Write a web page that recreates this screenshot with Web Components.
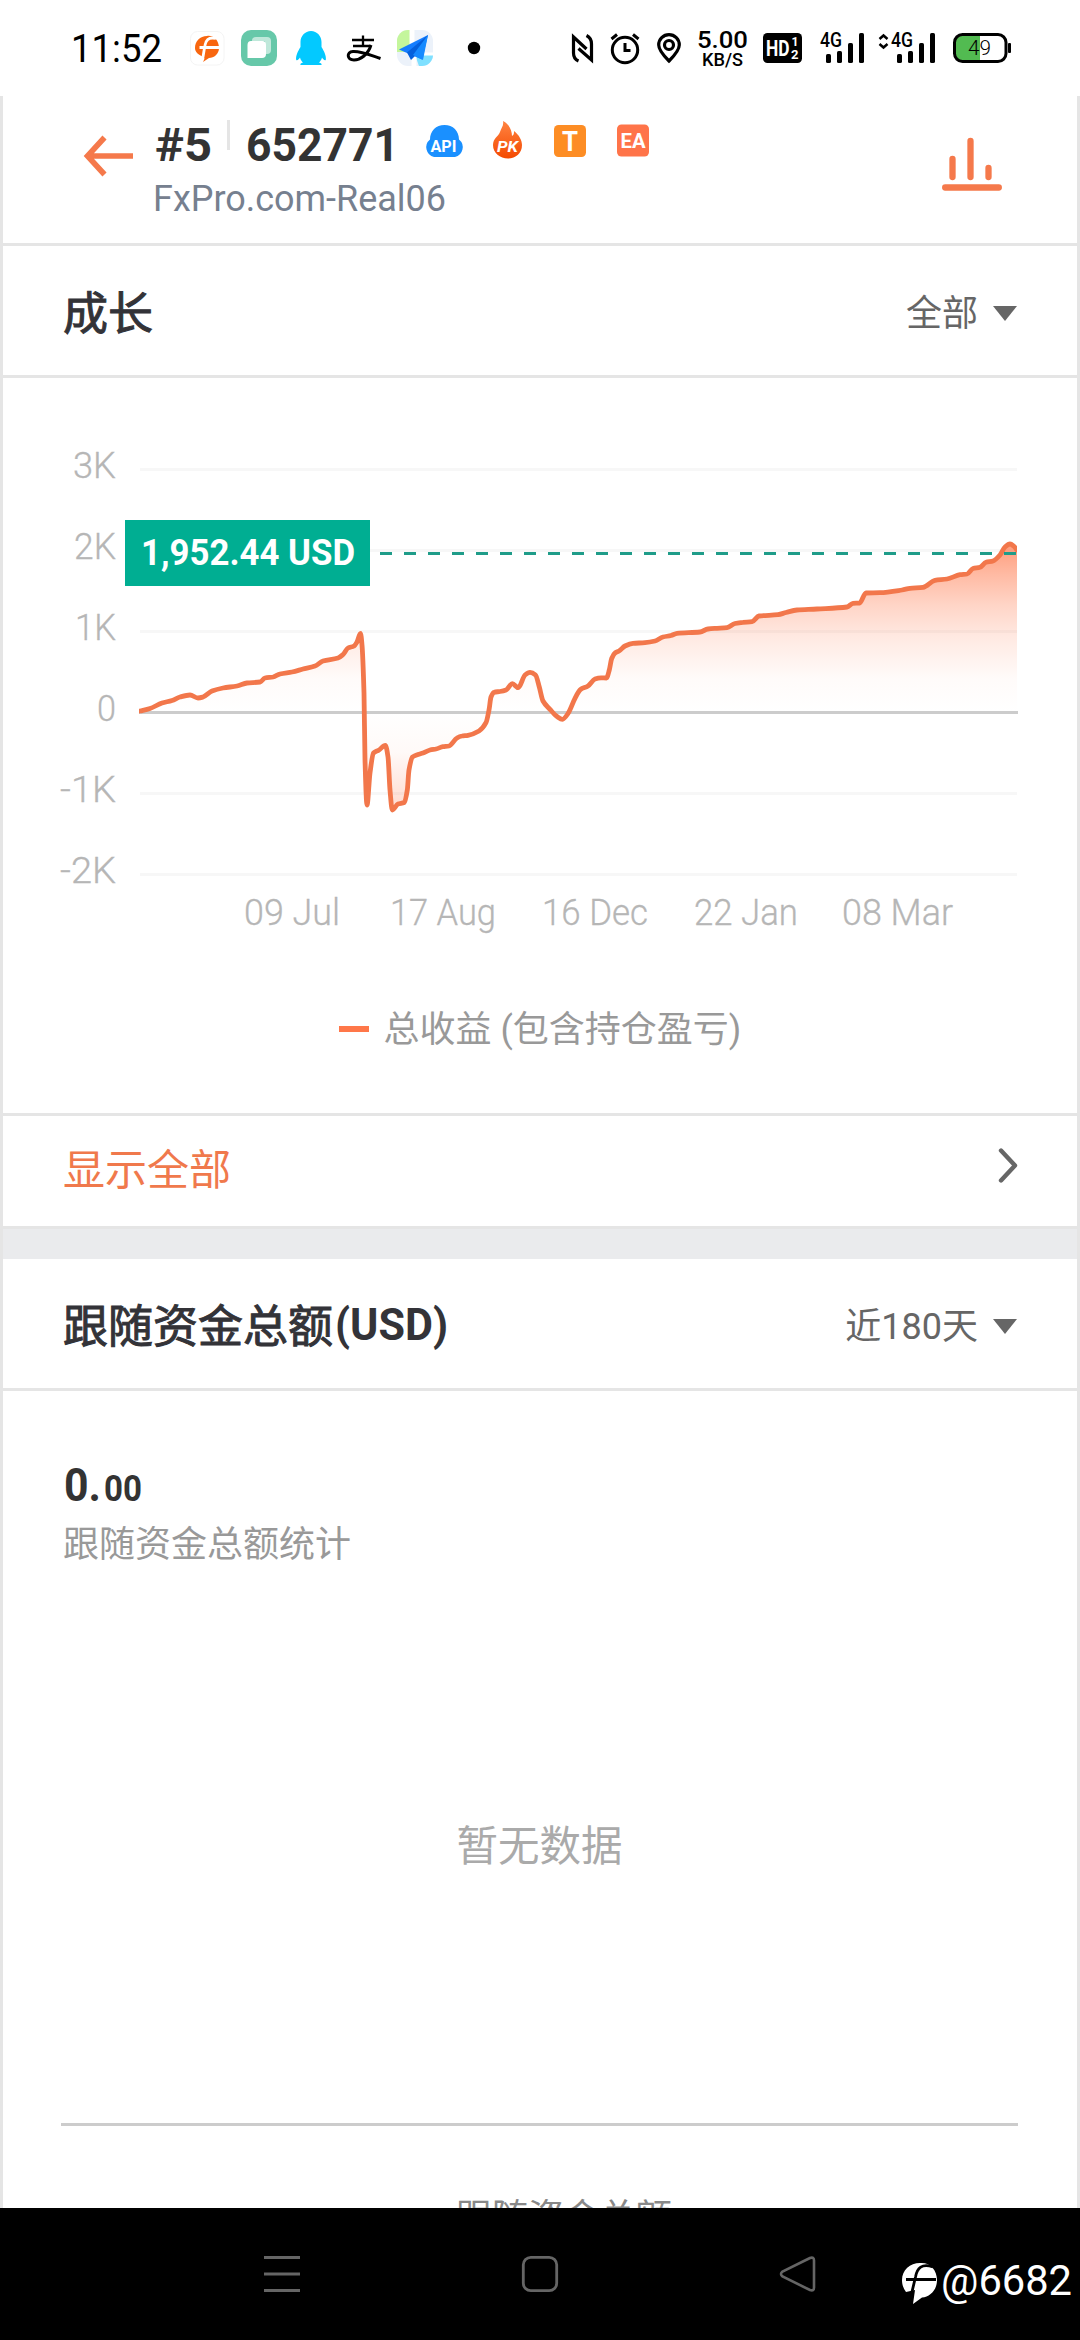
<!DOCTYPE html>
<html lang="zh-CN">
<head>
<meta charset="utf-8">
<title>#5 652771</title>
<style>
html,body{margin:0;padding:0;background:#fff}
body{width:1080px;height:2340px;overflow:hidden;font-family:Roboto,"Noto Sans CJK SC",sans-serif;color:#333}
</style>
</head>
<body>
<account-screen></account-screen>
<script>
const SANS = 'Roboto,"Noto Sans CJK SC",sans-serif';

function define(name, render) {
  customElements.define(name, class extends HTMLElement {
    connectedCallback() {
      if (this.shadowRoot) return;
      const t = document.createElement('template');
      t.innerHTML = render(this);
      this.attachShadow({ mode: 'open' }).appendChild(t.content.cloneNode(true));
    }
  });
}

// Latin text set to a fixed advance; its box is the cap height, baseline at the bottom.
define('din-text', el => {
  const size = +el.getAttribute('size'), w = +el.getAttribute('w');
  const h = Math.round(size * 0.711);
  const weight = el.getAttribute('weight') || 400;
  return `<style>:host{display:block;flex:none;width:${w}px;height:${h}px}svg{display:block;overflow:visible}</style>
  <svg width="${w}" height="${h}"><text x="0" y="${h}" textLength="${w}" lengthAdjust="spacingAndGlyphs" font-family='${SANS}' font-size="${size}" font-weight="${weight}" fill="currentColor">${el.textContent}</text></svg>`;
});

// Icons: [x, y, width, height, markup]
const T = (x, y, w, s, wt, txt, extra = '') =>
  `<text x="${x}" y="${y}" textLength="${w}" lengthAdjust="spacingAndGlyphs" font-family='${SANS}' font-size="${s}" font-weight="${wt}" ${extra}>${txt}</text>`;
const bars = x => `<g><rect x="${x}" y="54" width="5" height="9" rx="1.6"/><rect x="${x + 11}" y="51" width="5" height="12" rx="1.6"/><rect x="${x + 22}" y="43" width="5" height="20" rx="1.6"/><rect x="${x + 33}" y="33" width="5" height="30" rx="1.6"/></g>`;
const ICONS = {
  follow: [190, 28, 35, 40, `<rect x="190.500" y="31.500" width="33.500" height="33.500" rx="7" fill="#fff" stroke="#f4f4f4"/>
    <path d="M207 36C213 35 219 40 219 48C219 54 214 58 209 58L203 62C204 60 205 58 204 57C198 55 195 52 195 48C195 41 200 36 207 36Z" fill="#f8660f"/>
    <path d="M216 38.500C208 36.500 205.500 41 204.800 46L203 57M199.500 47.500H219" fill="none" stroke="#fff" stroke-width="2.800"/>`],
  green: [241, 28, 36, 40, `<rect x="241" y="30" width="36" height="36" rx="10" fill="#66c8a9"/>
    <path d="M252 41V40.500Q252 37 256 37H267Q271 37 271 41V50Q271 54 267 54H265V41Z" fill="#bfe8da"/><path d="M251 41H262.500Q266 41 266 45V54Q266 58 262 58H247.500V45Q247.500 41 251 41Z" fill="#fff"/>`],
  penguin: [295, 28, 32, 40, `<path d="M311 31C317 31 321.500 36 321.500 42V47C324 51 326.500 56 325.800 60C324.500 61 323 59 322 57.500C321.500 60 320 61.500 319 62.500C321 63 322 64 321.500 65H300.500C300 64 301 63 303 62.500C302 61.500 300.500 60 300 57.500C299 59 297.500 61 296.200 60C295.500 56 298 51 300.500 47V42C300.500 36 305 31 311 31Z" fill="#03c9ff"/>`],
  pay: [346, 28, 36, 40, `<g fill="none" stroke="#000"><path d="M352 40H374M353 46H370.500M363 35.500V46" stroke-width="2.300"/><path d="M371 45C368 55 360 60 354 60C347 60 346 52 353 51.500C361 51 370 55 380.500 58.500" stroke-width="3"/></g>`],
  maps: [396, 28, 38, 40, `<clipPath id="m"><rect x="397" y="30" width="36" height="36" rx="11"/></clipPath><g clip-path="url(#m)"><rect x="397" y="30" width="36" height="36" fill="#ecf2fa"/><path d="M397 30H411V52H397Z" fill="#c4f69c"/><path d="M415 55H433V66H419Z" fill="#7fe0ff"/><path d="M411 30V54M415 54V66M411 54H433M413 30V66" stroke="#fff" stroke-width="3"/></g><path d="M428 35L399 49.500L407 53L422 59.500Z" fill="#157dff"/><path d="M428 35L407 52.500L411 60L415 56Z" fill="#0560dc"/><path d="M428 35L413 55L423 60Z" fill="#168aff"/>`],
  dot: [467, 28, 14, 40, `<circle cx="474" cy="48" r="6.200"/>`],
  nfc: [571, 28, 23, 40, `<path d="M578.500 61Q573.500 59 573.500 53V37L586.500 49M586.500 35.500Q591.500 38 591.500 44V60L578.500 48.500" fill="none" stroke="#000" stroke-width="3.200"/>`],
  alarm: [609, 28, 32, 40, `<g fill="none" stroke="#000" stroke-width="3"><circle cx="625" cy="50" r="12.700"/><path d="M611.500 39L617 34.500M638.500 39L633 34.500M625 43V50.500H630.500"/></g>`],
  pin: [656, 28, 26, 40, `<g fill="none" stroke="#000" stroke-width="3.200"><path d="M669 61C663 55 658.700 50 658.700 45A10.300 10.300 0 0 1 679.300 45C679.300 50 675 55 669 61Z"/><circle cx="669" cy="45" r="4.500"/></g>`],
  speed: [696, 28, 54, 40, T(697, 48, 51, 24.5, 500, '5.00') + T(702, 65.5, 41, 18.5, 500, 'KB/S')],
  hd: [763, 28, 39, 40, `<rect x="763" y="33" width="39" height="30" rx="4.500"/><g fill="#fff">${T(766, 56, 23.5, 21.5, 700, 'HD')}${T(791.5, 46, 7, 12, 700, '1')}${T(791, 59, 7.5, 12, 700, '2')}</g>`],
  sim1: [819, 28, 46, 40, T(820, 47, 22, 19.500, 500, '4G') + bars(826)],
  sim2: [878, 28, 58, 40, `<path d="M879.500 39L883.500 35.500L887.500 39M879.500 44L883.500 47.500L887.500 44" fill="none" stroke="#000" stroke-width="2.500"/>` + T(891, 47, 22, 19.500, 500, '4G') + bars(897)],
  battery: [952, 28, 60, 40, `<path d="M962 35H980V61.500H962Q955 61.500 955 54V42Q955 35 962 35Z" fill="#52bb51"/><rect x="954.500" y="34.500" width="51.500" height="27" rx="8" fill="none" stroke="#000" stroke-width="3"/><rect x="1008" y="43" width="3" height="10" rx="1"/>` + T(968, 55, 23, 20.5, 300, '49')],
  back: [82, 134, 53, 44, `<path d="M104.500 137.500L87.500 156L104.500 174.500M87 156H133" fill="none" stroke="#f5794b" stroke-width="5.600"/>`],
  api: [424, 119, 41, 44, `<path d="M434 157A10 10 0 0 1 430 139.500C430 131 436 125 444.500 125S459 131 459 139.500A10 10 0 0 1 455 157Z" fill="#1a90ff"/>${T(430.5, 151.500, 26, 16.5, 700, 'API', 'fill="#fff"')}`],
  flame: [492, 119, 31, 44, `<defs><linearGradient id="f" x1="0" y1="0" x2="0" y2="1"><stop offset="0" stop-color="#ff8442"/><stop offset="1" stop-color="#f44900"/></linearGradient></defs><path d="M503 121C509 124 512 130 512 136C514 135 514 133 514 131C519 135 522 140 522 145C522 153 516 158.500 508 158.500S493 153 493 145C493 138 498 137 500 132C501 128 504 126 503 121Z" fill="url(#f)"/>${T(497, 151.500, 21, 15.5, 700, 'PK', 'fill="#fff" font-style="italic"')}`],
  trade: [554, 119, 32, 44, `<rect x="554" y="125" width="32" height="32" rx="4.500" fill="#fd8d24"/>${T(562, 150.500, 16, 28, 700, 'T', 'fill="#fff"')}`],
  ea: [617, 119, 32, 44, `<rect x="617" y="124.500" width="32" height="32" rx="4.500" fill="#ff7449"/>${T(620.5, 148, 25, 20, 700, 'EA', 'fill="#fff"')}`],
  stats: [940, 136, 64, 57, `<g stroke="#f5794b" stroke-width="6.300" stroke-linecap="round"><path d="M952.500 159V177M970.500 141V177M988.500 168V177M945.200 187.500H998.800"/></g>`],
  caret: [993, 306, 24, 15, `<path d="M993 306H1017L1005 321Z" fill="#666"/>`],
  chevron: [997, 1146, 22, 39, `<path d="M1001 1150.500L1015 1165.500L1001 1180.500" fill="none" stroke="#666" stroke-width="4.400" stroke-linecap="round" stroke-linejoin="round"/>`],
  menu: [264, 2254, 36, 40, `<path d="M264 2257.500H300M264 2274H300M264 2290.500H300" stroke="#656565" stroke-width="3"/>`],
  home: [521, 2254, 38, 40, `<rect x="523.300" y="2257.300" width="33.400" height="33.400" rx="7.500" fill="none" stroke="#656565" stroke-width="2.800"/>`],
  prev: [779, 2254, 38, 40, `<path d="M810 2258L782.500 2271.500Q779.500 2274 782.500 2276.500L810 2290Q814 2291.500 814 2287.500V2260.500Q814 2256.500 810 2258Z" fill="none" stroke="#656565" stroke-width="2.600"/>`],
  brand: [902, 2260, 36, 46, `<path d="M920 2263C930 2262 937 2270 937 2280C937 2290 930 2297 922 2297.500L913 2304L915 2290L906 2292C903 2288 902 2284 902 2280C902 2270 910 2263 920 2263Z" fill="#fff"/><path d="M933 2267C922 2263 917 2268 915.500 2277L911 2296M906 2279.500H936" fill="none" stroke="#000" stroke-width="2.800"/>`]
};
define('ui-icon', el => {
  const [x, y, w, h, body] = ICONS[el.getAttribute('name')];
  return `<style>:host{display:block;flex:none;width:${w}px;height:${h}px;margin-left:${el.getAttribute('gap') || 0}px}svg{display:block;overflow:visible}</style>
  <svg width="${w}" height="${h}" viewBox="${x} ${y} ${w} ${h}">${body}</svg>`;
});

define('status-bar', () => {
  const left = ['follow', 'green', 'penguin', 'pay', 'maps', 'dot'];
  const right = ['nfc', 'alarm', 'pin', 'speed', 'hd', 'sim1', 'sim2', 'battery'];
  let edge = 162;
  const item = n => { const g = ICONS[n][0] - edge; edge = ICONS[n][0] + ICONS[n][2]; return `<ui-icon name="${n}" gap="${g}"></ui-icon>`; };
  return `<style>:host{display:flex;align-items:center;height:96px;padding-left:71px;box-sizing:border-box;color:#000}</style>
  <din-text size="38" w="91" weight="400">11:52</din-text>${[...left, ...right].map(item).join('')}`;
});

define('account-header', () => `<style>
  :host{display:flex;height:147px;border-bottom:3px solid #e5e5e5;box-sizing:content-box}
  .back{margin:38px 0 0 79px}.info{margin-left:20px;padding-top:23px;flex:1}
  .row{display:flex;align-items:center;height:44px}.row din-text{margin-top:6px;color:#333}
  .bar{width:3px;height:30px;background:#e5e5e5;margin:-12px 16px 0 15px}
  .server{color:#76808f;margin:22px 0 0 -2px}.stats{margin:40px 73px 0 0}</style>
  <ui-icon class="back" name="back"></ui-icon>
  <div class="info"><div class="row"><din-text size="47" w="57" weight="700">#5</din-text><span class="bar"></span><din-text size="47" w="153" weight="700">652771</din-text>
  <ui-icon name="api" gap="25"></ui-icon><ui-icon name="flame" gap="27"></ui-icon><ui-icon name="trade" gap="31"></ui-icon><ui-icon name="ea" gap="31"></ui-icon></div>
  <din-text class="server" size="36.5" w="293">FxPro.com-Real06</din-text></div>
  <ui-icon class="stats" name="stats"></ui-icon>`);

define('section-head', () => `<style>
  :host{display:flex;align-items:center;justify-content:space-between;height:129px;padding:0 60px;border-bottom:3px solid #e5e5e5}
  .t,.f{display:flex;align-items:center}.t{font-size:45px;color:#333338;-webkit-text-stroke:1px #333338}
  .f{font-size:36px;color:#666;gap:15px}.f ui-icon{margin-top:6px}.f slot{display:block;margin-top:-2px}</style>
  <div class="t"><slot name="title"></slot></div><div class="f"><slot name="filter"></slot><ui-icon name="caret"></ui-icon></div>`);

const SERIES = [[140,711],[150,708.5],[162,703],[172,700.5],[180,697],[190,695],[198,698],[203,697],[212,691],[223,688],[237,686],[247,683],[260,682],[265,678],[273,677],[280,674],[292,672],[303,669],[315,666],[323,661],[338,658],[343,654.5],[348,648],[354,646],[357,642],[360.500,633.500],[362,645],[364,693],[365,760],[367,805],[370,773],[373.500,753],[379,750],[385.300,745.300],[388,757],[390,790],[392.300,810],[398,804],[404.300,802.500],[407.300,790],[409,770],[412.500,757],[418,754.5],[423,753],[430,750],[436,749],[443,746.7],[449,746],[457,738],[462,736],[468,735.3],[479,731],[486,722.7],[489,710],[491,697],[494,692.3],[500,691.5],[506,690],[512.300,683.7],[518.300,687.7],[525,675],[530,672.3],[535.500,675],[539.300,687],[543,701],[550,709.3],[557,716.5],[562.500,719.3],[568,713.5],[575,698.3],[580.500,689.5],[588,686],[595,679],[601,677.8],[606.500,678],[609.300,670],[611.700,658.5],[615,653],[619,651],[625,646],[633,643.3],[645,642.7],[655,641],[663,637],[671,635.5],[677,633.3],[700,632],[708,629],[717,628.300],[727,627.7],[735,623.5],[743,622.3],[752,621.7],[759,616],[778,614.7],[786,612.5],[797,610],[817,609],[847,607],[853,603.3],[859.500,603],[866,593],[880,592.7],[902,590],[910,588.3],[923,587.3],[935,580.3],[947,579],[960,574.700],[967,574],[973,568.5],[980,567.3],[986,562.3],[993,561],[1000,555],[1005,547],[1010,544],[1014,546.3],[1017,550]];
// Monotone cubic through the points, so steep moves never overshoot.
function curve(p) {
  const n = p.length, d = [], m = [];
  for (let i = 0; i < n - 1; i++) d.push((p[i + 1][1] - p[i][1]) / (p[i + 1][0] - p[i][0]));
  m[0] = d[0]; m[n - 1] = d[n - 2];
  for (let i = 1; i < n - 1; i++) m[i] = d[i - 1] * d[i] <= 0 ? 0 : 2 * d[i - 1] * d[i] / (d[i - 1] + d[i]);
  let s = `M${p[0]}`;
  for (let i = 0; i < n - 1; i++) {
    const h = (p[i + 1][0] - p[i][0]) / 3;
    s += `C${(p[i][0] + h).toFixed(1)} ${(p[i][1] + m[i] * h).toFixed(1)} ${(p[i + 1][0] - h).toFixed(1)} ${(p[i + 1][1] - m[i + 1] * h).toFixed(1)} ${p[i + 1][0]} ${p[i + 1][1]}`;
  }
  return s;
}
define('growth-chart', () => {
  const line = curve(SERIES);
  const grid = [469.5, 550.5, 631.5, 793.5, 874.5].map(y => `<path d="M140 ${y}H1017" stroke="#f7f7f7" stroke-width="3"/>`).join('');
  const yl = [['3K', 73, 469], ['2K', 74, 550], ['1K', 75, 631], ['0', 97, 712], ['-1K', 60, 793], ['-2K', 60, 874]].map(([t, x, y]) => T(x, y + 9, 116 - x, 36, 300, t)).join('');
  const xl = [['09 Jul', 244, 96], ['17 Aug', 390, 106], ['16 Dec', 542, 106], ['22 Jan', 694, 104], ['08 Mar', 842, 111]].map(([t, x, w]) => T(x, 925, w, 36, 300, t)).join('');
  return `<style>:host{display:block;height:735px;border-bottom:3px solid #e5e5e5}svg{display:block;height:590px}
  .legend{display:flex;align-items:center;justify-content:center;gap:15px;height:124px;font-size:36px;line-height:52px;color:#999;white-space:pre}
  .legend i{width:30px;height:6px;background:#ff7749;margin-top:-2px}</style>
  <svg width="1074" viewBox="3 378 1074 590">
  <defs><linearGradient id="up" gradientUnits="userSpaceOnUse" x1="0" y1="544" x2="0" y2="712"><stop offset="0" stop-color="#ff7547" stop-opacity=".72"/><stop offset=".18" stop-color="#ff7547" stop-opacity=".5"/><stop offset=".36" stop-color="#ff7547" stop-opacity=".31"/><stop offset=".55" stop-color="#ff7547" stop-opacity=".16"/><stop offset=".8" stop-color="#ff7547" stop-opacity=".03"/><stop offset="1" stop-color="#ff7547" stop-opacity="0"/></linearGradient>
  <linearGradient id="dn" gradientUnits="userSpaceOnUse" x1="0" y1="712" x2="0" y2="812"><stop offset="0" stop-color="#ff7547" stop-opacity="0"/><stop offset=".4" stop-color="#ff7547" stop-opacity=".04"/><stop offset="1" stop-color="#ff7547" stop-opacity=".27"/></linearGradient>
  <clipPath id="a"><path d="M0 378H1080V712.500H0Z"/></clipPath><clipPath id="b"><path d="M0 712.500H1080V900H0Z"/></clipPath><clipPath id="c"><path d="M139 500H1017V850H139Z"/></clipPath></defs>
  ${grid}<g fill="#b6b6b6" stroke="#b6b6b6" stroke-width=".3">${yl}${xl}</g>
  <path d="M139 712.500H1018" stroke="#ccc" stroke-width="3"/>
  <path d="${line}V712.500H140Z" fill="url(#up)" clip-path="url(#a)"/><path d="${line}V712.500H140Z" fill="url(#dn)" clip-path="url(#b)"/>
  <path d="${line}" fill="none" stroke="#f2774b" stroke-width="4.800" stroke-linejoin="round" stroke-linecap="round" clip-path="url(#c)"/>
  <path d="M380 553.500H1016" stroke="#1f9c89" stroke-width="3" stroke-dasharray="12 12"/>
  <rect x="125" y="520" width="245" height="66" fill="#00ae92"/>${T(141, 565, 214, 36, 700, '1,952.44 USD', 'fill="#fff"')}
  </svg><div class="legend"><i></i><span>总收益 (包含持仓盈亏)</span></div>`;
});

define('show-all', () => `<style>:host{display:flex;align-items:center;justify-content:space-between;height:110px;padding:0 58px 0 60px;border-bottom:3px solid #e5e5e5}
  span{font-size:42px;color:#f0794c;line-height:60px;margin-top:-1px}ui-icon{margin-top:-11px}</style><span><slot></slot></span><ui-icon name="chevron"></ui-icon>`);

define('fund-total', () => `<style>:host{display:block;height:817px;overflow:hidden}
  .n{display:flex;align-items:flex-end;gap:3px;padding:76px 0 0 61px;height:34px;color:#333}
  .cap{font-size:36px;line-height:52px;color:#999;margin:18px 0 0 60px}
  .empty{height:555px;display:flex;justify-content:center;color:#aaa;font-size:41.500px;line-height:60px;box-sizing:border-box;padding-top:246px;border-bottom:3px solid #ccc;margin:0 59px 0 58px}
  .leg{font-size:36px;line-height:52px;color:#888;margin:66px 0 0 453px;white-space:nowrap}</style>
  <div class="n"><din-text size="47" w="37" weight="700">0.</din-text><din-text size="36.5" w="38" weight="700">00</din-text></div>
  <div class="cap">跟随资金总额统计</div><div class="empty">暂无数据</div><div class="leg">跟随资金总额</div>`);

define('nav-bar', () => `<style>:host{display:flex;align-items:center;height:132px;background:#000;color:#fff}din-text{margin:11px 0 0 3px}ui-icon[name=brand]{margin-top:17px}</style>
  <ui-icon name="menu" gap="264"></ui-icon><ui-icon name="home" gap="221"></ui-icon><ui-icon name="prev" gap="220"></ui-icon><ui-icon name="brand" gap="85"></ui-icon><din-text size="43" w="131" weight="400">@6682</din-text>`);

define('account-screen', () => `<style>:host{display:block;width:1080px;height:2340px;background:#fff}
  main{height:2112px;box-sizing:border-box;border:solid #e5e5e5;border-width:0 3px;overflow:hidden}
  .band{height:30px;background:#eaebed}.usd{-webkit-text-stroke:0;margin-left:2px}</style>
  <status-bar></status-bar>
  <main><account-header></account-header>
  <section-head><span slot="title">成长</span><span slot="filter">全部</span></section-head>
  <growth-chart></growth-chart><show-all>显示全部</show-all><div class="band"></div>
  <section-head><span slot="title">跟随资金总额</span><din-text class="usd" slot="title" size="45" w="113" weight="700">(USD)</din-text><span slot="filter">近180天</span></section-head>
  <fund-total></fund-total></main>
  <nav-bar></nav-bar>`);
</script>
</body>
</html>
